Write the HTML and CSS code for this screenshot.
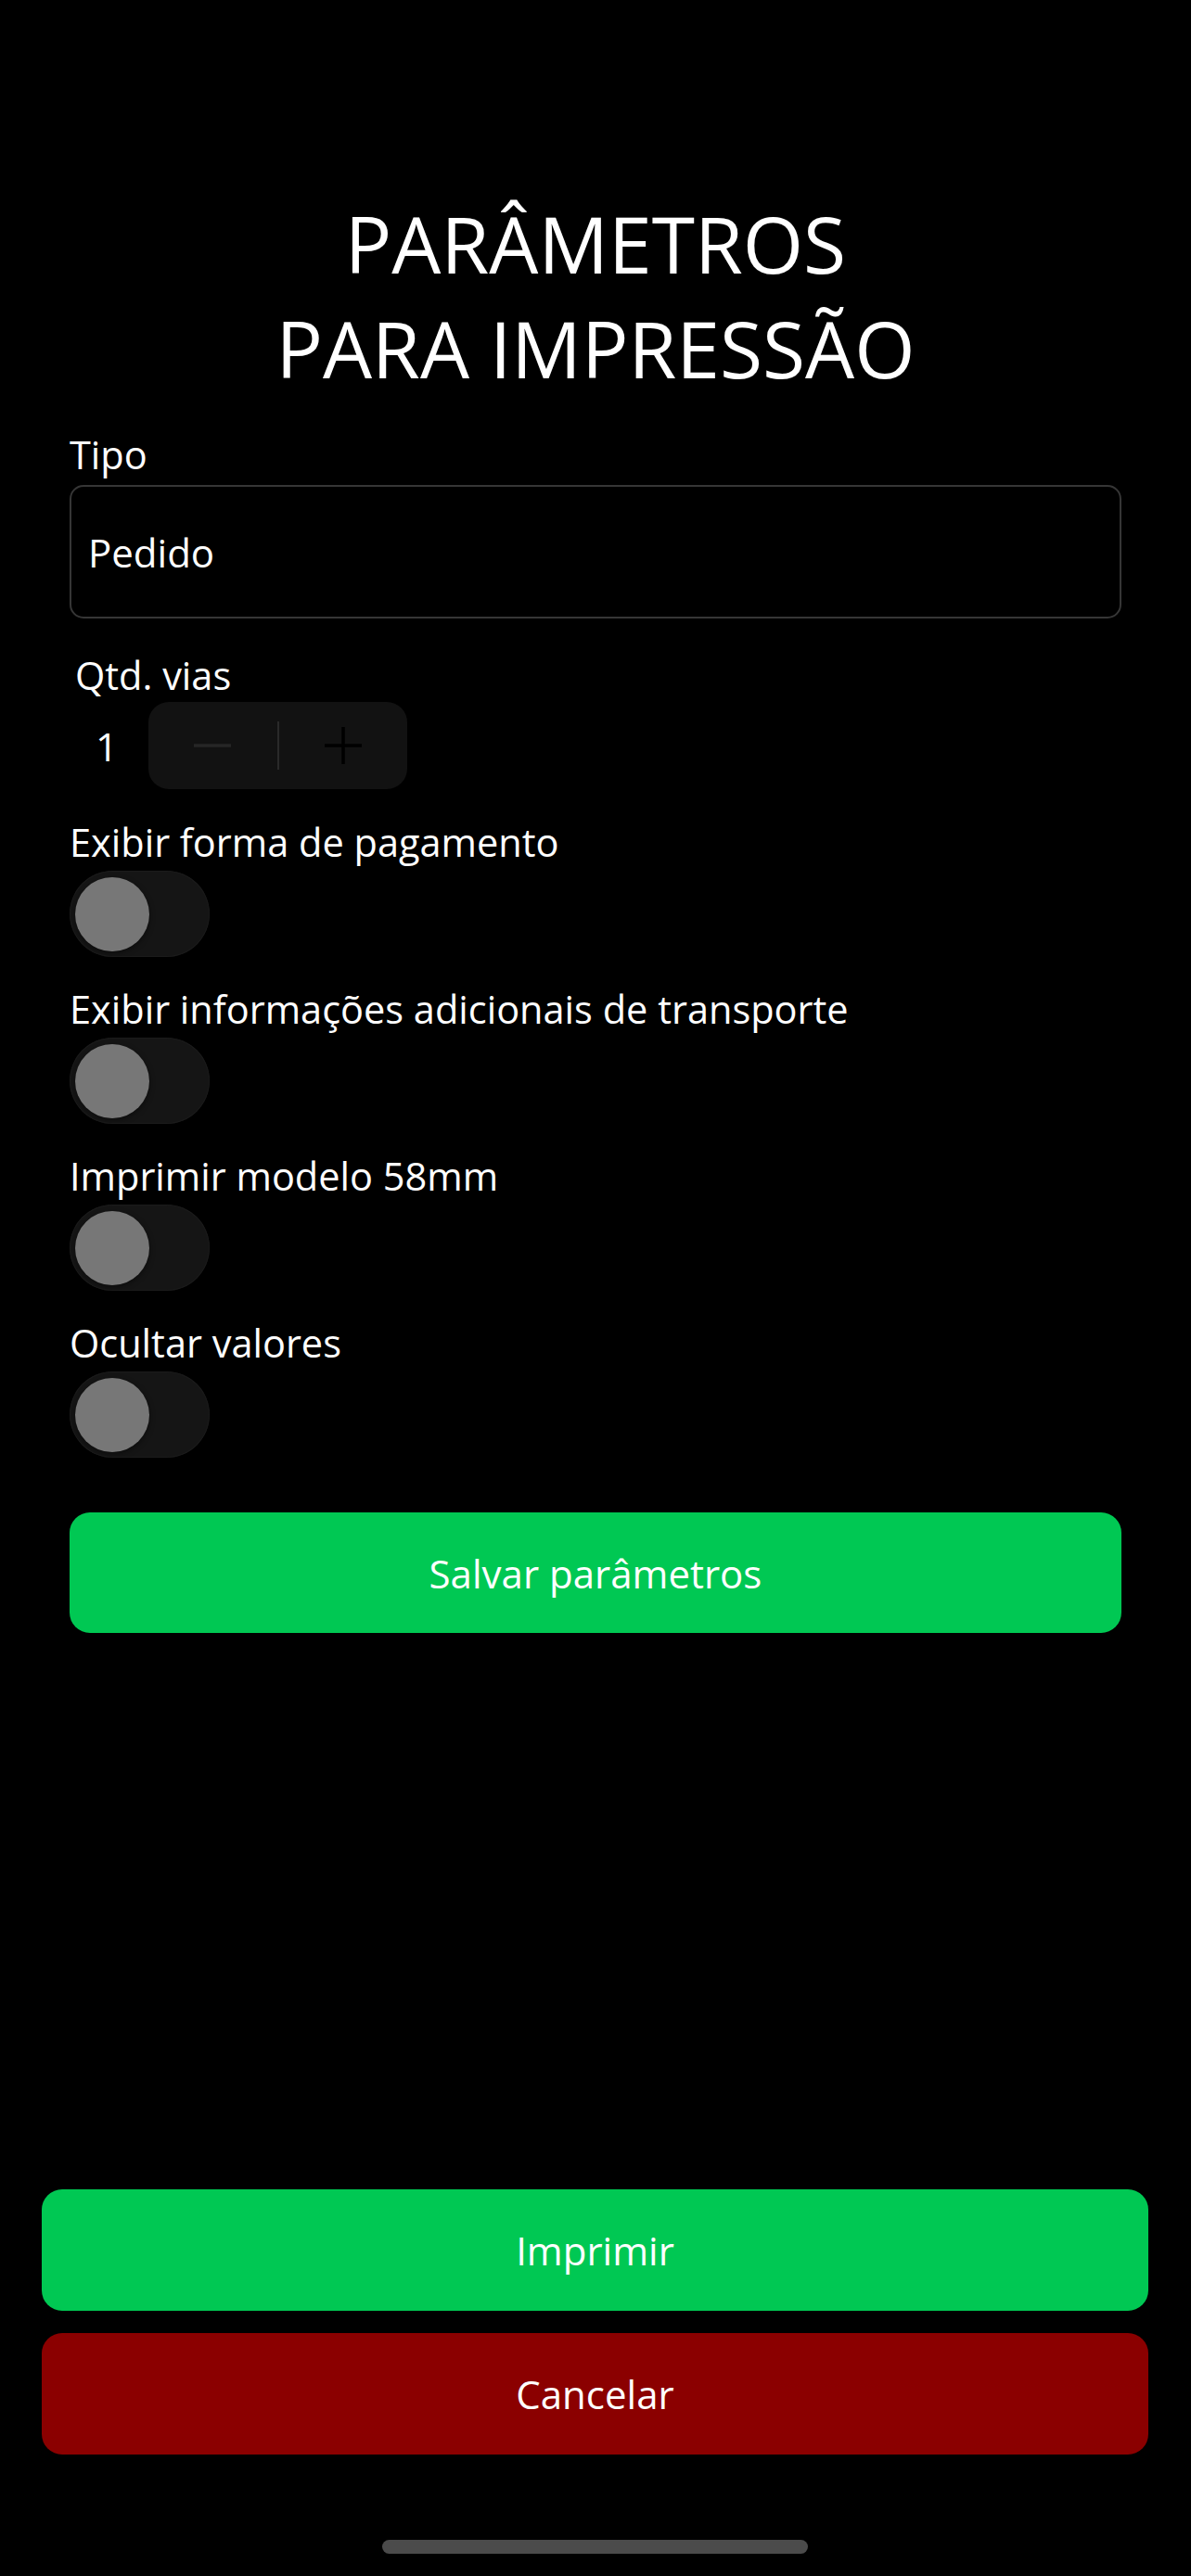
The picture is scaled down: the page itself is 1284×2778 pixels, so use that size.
FILE: index.html
```html
<!DOCTYPE html>
<html lang="pt-BR">
<head>
<meta charset="utf-8">
<title>Parâmetros para impressão</title>
<link rel="stylesheet" href="styles.css">
</head>
<body>
<div class="screen">
  <main class="content">
    <h1 class="title">PARÂMETROS<br>PARA IMPRESSÃO</h1>

    <div class="label label-tipo">Tipo</div>
    <div class="input">Pedido</div>

    <div class="label label-qtd">Qtd. vias</div>
    <div class="stepper-row">
      <span class="qty">1</span>
      <div class="stepper">
        <span class="step-btn">
          <svg width="40" height="40" viewBox="0 0 40 40"><line x1="0" y1="20" x2="40" y2="20" stroke="#262626" stroke-width="3.5" stroke-linecap="round"/></svg>
        </span>
        <span class="step-div"></span>
        <span class="step-btn">
          <svg width="40" height="40" viewBox="0 0 40 40"><line x1="0" y1="20" x2="40" y2="20" stroke="#000" stroke-width="3.5" stroke-linecap="round"/><line x1="20" y1="0.5" x2="20" y2="39.5" stroke="#000" stroke-width="3.5" stroke-linecap="round"/></svg>
        </span>
      </div>
    </div>

    <div class="toggle-group first">
      <div class="label">Exibir forma de pagamento</div>
      <div class="switch"><span class="knob"></span></div>
    </div>
    <div class="toggle-group">
      <div class="label">Exibir informações adicionais de transporte</div>
      <div class="switch"><span class="knob"></span></div>
    </div>
    <div class="toggle-group">
      <div class="label">Imprimir modelo 58mm</div>
      <div class="switch"><span class="knob"></span></div>
    </div>
    <div class="toggle-group">
      <div class="label">Ocultar valores</div>
      <div class="switch"><span class="knob"></span></div>
    </div>

    <button class="btn btn-green btn-save">Salvar parâmetros</button>
  </main>

  <footer class="footer">
    <button class="btn btn-green btn-big">Imprimir</button>
    <button class="btn btn-red btn-big btn-cancel">Cancelar</button>
    <div class="home-indicator"></div>
  </footer>
</div>
</body>
</html>
```

FILE: styles.css
```css
* { box-sizing: border-box; }

html, body {
  margin: 0;
  padding: 0;
  background: #000;
}

body {
  font-family: "Open Sans", "Noto Sans", "Liberation Sans", sans-serif;
  color: #fff;
}

.screen {
  display: flex;
  flex-direction: column;
  min-height: 2778px;
}

.content {
  display: flex;
  flex-direction: column;
  padding: 206px 75px 0 75px;
}

.title {
  margin: 0;
  font-size: 84px;
  line-height: 113px;
  font-weight: 400;
  text-align: center;
  letter-spacing: 0;
}

.label {
  font-size: 41.5px;
  line-height: 57px;
  white-space: nowrap;
}

.label-tipo { margin-top: 30px; }

.input {
  margin-top: 4px;
  height: 144px;
  border: 2px solid #363636;
  border-radius: 15px;
  display: flex;
  align-items: center;
  padding-left: 18px;
  font-size: 42px;
  line-height: 57px;
}

.label-qtd {
  margin-top: 33px;
  padding-left: 6px;
}

.stepper-row {
  margin-top: 0;
  display: flex;
  align-items: center;
  height: 94px;
}

.qty {
  width: 24px;
  margin-left: 28px;
  text-align: center;
  font-size: 42px;
  line-height: 57px;
}

.stepper {
  margin-left: 33px;
  width: 279px;
  height: 94px;
  border-radius: 22px;
  background: #121212;
  display: flex;
  align-items: center;
}

.step-btn {
  flex: 1;
  display: flex;
  align-items: center;
  justify-content: center;
}

.step-btn svg { display: block; }

.step-div {
  width: 2px;
  height: 52px;
  background: #2a2a2a;
}

.toggle-group {
  display: flex;
  flex-direction: column;
  align-items: flex-start;
  margin-top: 28px;
}

.toggle-group.first { margin-top: 29px; }

.switch {
  margin-top: 2px;
  width: 151px;
  height: 93px;
  border-radius: 47px;
  background: #151515;
  box-shadow: inset 0 0 0 1px #1b1b1b;
  padding: 6px;
  display: flex;
  align-items: center;
}

.knob {
  display: block;
  width: 80px;
  height: 80px;
  border-radius: 50%;
  background: #777777;
  box-shadow: 0 2px 6px rgba(0, 0, 0, 0.45);
}

.btn {
  display: flex;
  align-items: center;
  justify-content: center;
  width: 100%;
  border: none;
  border-radius: 22px;
  color: #fff;
  font-family: "Open Sans", "Noto Sans", "Liberation Sans", sans-serif;
  font-size: 42px;
  line-height: 57px;
  padding: 0;
}

.btn-green { background: #00c853; }
.btn-red { background: #8b0000; }

.btn-save {
  margin-top: 59px;
  height: 130px;
}

.footer {
  margin-top: auto;
  padding: 0 46px 0 45px;
  display: flex;
  flex-direction: column;
}

.btn-big { height: 131px; }

.btn-cancel { margin-top: 24px; }

.home-indicator {
  margin: 92px auto 24px;
  width: 459px;
  height: 15px;
  border-radius: 8px;
  background: #4b4b4b;
}
```
